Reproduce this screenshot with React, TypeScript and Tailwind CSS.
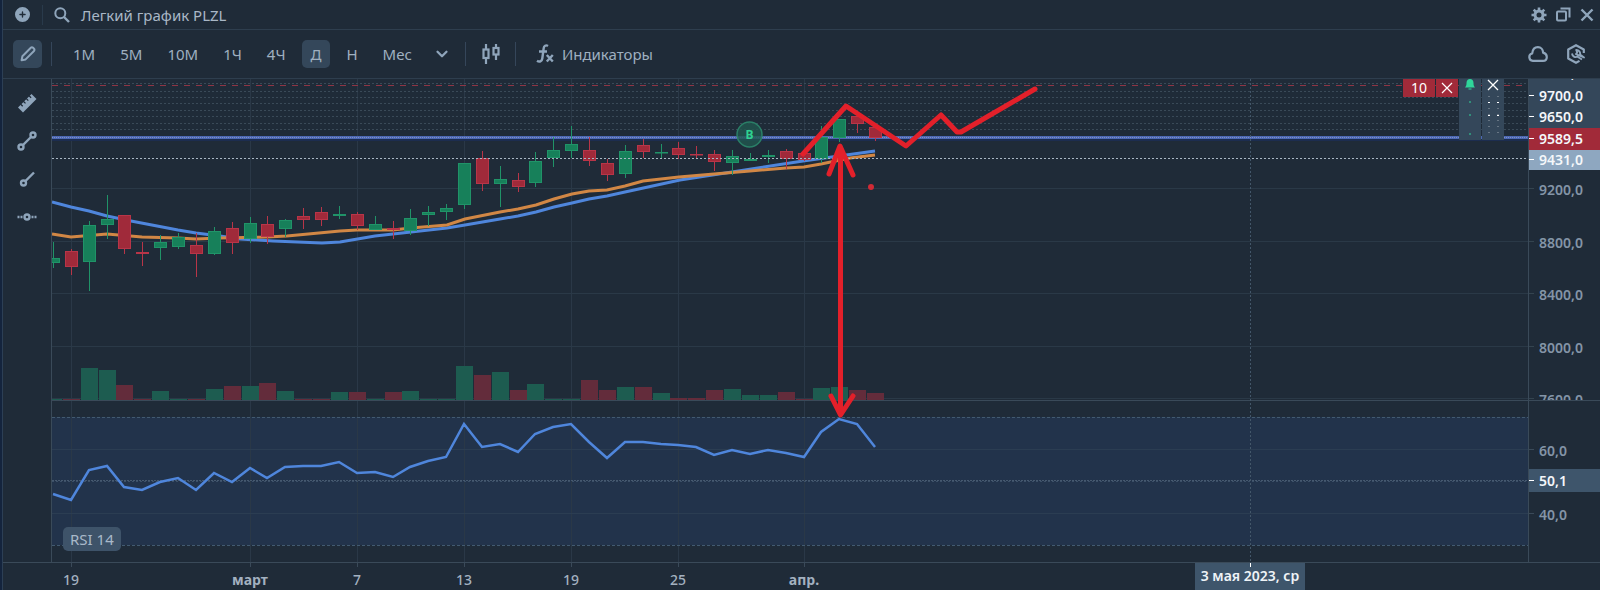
import type { ReactNode } from "react";
import { ChevronDown } from "lucide-react";
import { FaCirclePlus } from "react-icons/fa6";

// chart area starts right under the two toolbars
const TOP = 79;
const STEP = 17.87;

const barX = (i: number) => Math.floor(1.5 + i * STEP);

// [up, body top, body bottom, high, low, volume top]
const bars: [number, number, number, number, number, number][] = [
  [1, 258, 263, 242, 268, 399],
  [0, 251, 267, 249, 275, 399],
  [1, 225, 262, 221, 291, 368],
  [1, 219, 225, 195, 239, 370],
  [0, 215, 249, 215, 254, 385],
  [0, 252, 254, 242, 266, 399],
  [1, 242, 248, 235, 260, 391],
  [1, 237, 247, 233, 249, 399],
  [0, 245, 254, 233, 277, 399],
  [1, 231, 254, 227, 255, 389],
  [0, 228, 243, 222, 254, 386],
  [1, 223, 239, 217, 243, 386],
  [0, 224, 237, 216, 244, 383],
  [1, 220, 229, 219, 237, 391],
  [0, 216, 220, 208, 229, 399],
  [0, 212, 220, 207, 226, 399],
  [1, 214, 216, 206, 219, 392],
  [0, 214, 226, 212, 230, 392],
  [1, 224, 230, 216, 230, 399],
  [0, 228, 230, 221, 239, 392],
  [1, 218, 231, 209, 235, 391],
  [1, 212, 215, 206, 226, 399],
  [1, 208, 212, 204, 220, 399],
  [1, 163, 205, 163, 209, 366],
  [0, 158, 184, 151, 191, 375],
  [1, 179, 184, 166, 207, 372],
  [0, 180, 187, 173, 192, 390],
  [1, 161, 183, 152, 187, 384],
  [1, 150, 158, 137, 167, 399],
  [1, 144, 151, 126, 158, 399],
  [0, 150, 161, 137, 166, 380],
  [0, 163, 175, 159, 181, 390],
  [1, 151, 174, 145, 178, 387],
  [0, 145, 152, 139, 158, 387],
  [1, 152, 153, 144, 159, 393],
  [0, 148, 155, 142, 159, 398],
  [0, 154, 155, 146, 159, 398],
  [0, 154, 162, 150, 171, 390],
  [1, 156, 163, 150, 175, 389],
  [1, 159, 161, 153, 161, 395],
  [1, 155, 157, 150, 163, 395],
  [0, 151, 159, 149, 169, 392],
  [0, 153, 160, 151, 161, 399],
  [1, 137, 159, 126, 163, 388],
  [1, 119, 138, 119, 142, 387],
  [0, 116, 124, 114, 133, 390],
  [0, 127, 138, 125, 141, 393],
];

const slowMa =
  "0,202 19,207 37,211 55,216 79,221 126,230 144,233 168,236 188,239 221,241 270,243 288,242 323,236 359,232 395,228 413,225 448,219 466,216 484,212 502,207 520,203 537,199 555,196 573,192 628,180 680,172 751,161 787,156 823,151";
const fastMa =
  "0,234 19,237 55,234 90,237 126,238 144,239 168,238 215,237 235,236 288,231 305,230 341,230 359,228 395,225 413,219 448,212 466,209 484,205 502,199 520,194 537,191 555,190 573,186 591,181 627,177 662,174 698,171 734,168 752,167 769,164 798,158 823,155";

const rsi = [
  494, 500, 470, 466, 487, 490, 482, 478, 490, 473, 482, 468, 478, 467, 466, 466,
  462, 473, 472, 477, 467, 461, 457, 424, 447, 444, 452, 434, 427, 424, 442, 458,
  442, 442, 444, 445, 447, 455, 450, 454, 450, 453, 457, 432, 419, 424, 447,
];

const dates = [
  { i: 1, label: "19" },
  { i: 11, label: "март", bold: true },
  { i: 17, label: "7" },
  { i: 23, label: "13" },
  { i: 29, label: "19" },
  { i: 35, label: "25" },
  { i: 42, label: "апр.", bold: true },
];

const prices = [
  { y: 188, label: "9200,0" },
  { y: 241, label: "8800,0" },
  { y: 293, label: "8400,0" },
  { y: 346, label: "8000,0" },
  { y: 398, label: "7600,0" },
];

const orderLevels = [83, 91, 97, 103, 110, 116, 123, 129];
const intervals = ["1М", "5М", "10М", "1Ч", "4Ч", "Д", "Н", "Мес"];

function Divider() {
  return <div className="h-6 w-px bg-[#35465a]" />;
}

function IconButton({ label, children, className = "" }: { label: string; children: ReactNode; className?: string }) {
  return (
    <button type="button" aria-label={label} className={`flex items-center justify-center ${className}`}>
      {children}
    </button>
  );
}

function TitleBar() {
  return (
    <header className="flex h-[30px] items-center border-b border-[#2e3e4e] pr-[6px] pl-3">
      <IconButton label="Добавить">
        <FaCirclePlus size={15} />
      </IconButton>
      <span className="ml-3 h-5 w-px bg-[#293a4b]" />
      <IconButton label="Поиск" className="ml-[11px]">
        <svg width="16" height="16" viewBox="0 0 16 16" fill="none" stroke="currentColor">
          <circle cx="6.3" cy="6.3" r="5" strokeWidth="2" />
          <path d="M10 10l5 5" strokeWidth="2.4" />
        </svg>
      </IconButton>
      <h1 className="ml-[11px] text-[15px] leading-5 text-[#a9b7c6]">Легкий график PLZL</h1>
      <div className="ml-auto flex items-center gap-[9px]">
        <IconButton label="Настройки">
          <svg width="16" height="16" viewBox="0 0 16 16" fill="none" stroke="currentColor">
            <circle cx="8" cy="8" r="4" strokeWidth="3" />
            <path
              d="M8 .5v3M8 12.500v3M.5 8h3M12.500 8h3M2.700 2.700l2 2M11.300 11.300l2 2M2.700 13.300l2-2M11.300 4.700l2-2"
              strokeWidth="2.600"
            />
          </svg>
        </IconButton>
        <IconButton label="Дублировать">
          <svg width="15" height="15" viewBox="0 0 15 15" fill="none" stroke="currentColor" strokeWidth="2">
            <rect x="1" y="4.500" width="9" height="9" rx="1" />
            <path d="M4.500 1.500H13.500v9" />
          </svg>
        </IconButton>
        <IconButton label="Закрыть">
          <svg width="14" height="14" viewBox="0 0 14 14" stroke="currentColor" strokeWidth="2.400">
            <path d="M1.500 1.500l11 11M12.500 1.500l-11 11" />
          </svg>
        </IconButton>
      </div>
    </header>
  );
}

function Toolbar() {
  return (
    <div className="flex h-[49px] items-center border-b border-[#2e3e4e] pb-px pl-[10px] pr-[15px]">
      <IconButton label="Рисование" className="h-7 w-[29px] rounded-[5px] bg-[#34475a]">
        <svg width="16" height="16" viewBox="0 0 16 16" fill="none" stroke="currentColor" strokeWidth="2" strokeLinejoin="round">
          <path d="M1.6 14.2l.8-4L10.8 1.8a1.6 1.6 0 0 1 2.3 0l.9.9a1.6 1.6 0 0 1 0 2.3L5.6 13.4z" />
        </svg>
      </IconButton>
      <div className="ml-[9px]">
        <Divider />
      </div>
      <nav className="ml-3 flex items-center gap-[7px] text-[15px] leading-5 text-[#9fb0c0]">
        {intervals.map((item) => (
          <button
            key={item}
            type="button"
            className={`h-7 rounded-[5px] px-[9px] ${item === "Д" ? "bg-[#34475a]" : ""}`}
          >
            {item}
          </button>
        ))}
      </nav>
      <IconButton label="Ещё интервалы" className="ml-3">
        <ChevronDown size={18} strokeWidth={3} />
      </IconButton>
      <div className="ml-[14px]">
        <Divider />
      </div>
      <IconButton label="Тип графика" className="ml-4">
        <svg width="18" height="20" viewBox="0 0 18 20" fill="none" stroke="currentColor" strokeWidth="2.200">
          <rect x="1.500" y="5.500" width="5" height="8.500" />
          <path d="M4 0v5M4 14v6M14 0v3M14 10.500v5.500" />
          <rect x="11.500" y="4" width="5" height="6.500" />
        </svg>
      </IconButton>
      <div className="ml-[15px]">
        <Divider />
      </div>
      <button type="button" className="ml-5 flex items-center gap-2 text-[15px] leading-5 text-[#9fb0c0]">
        <svg width="18" height="19" viewBox="0 0 18 19" fill="none" stroke="#8fa5bb" strokeWidth="2.4">
          <path d="M12 2C9.8.6 8 1.8 7.7 4.2L6.3 14.5C5.9 17.4 3.5 18.400 1 16.800M3 7.500h8" />
          <path d="M10.800 11l6 6.500M16.800 11l-6 6.500" />
        </svg>
        Индикаторы
      </button>
      <div className="ml-auto flex items-center gap-[19px]">
        <IconButton label="Облако">
          <svg width="20" height="16" viewBox="0 0 20 16" fill="none" stroke="currentColor" strokeWidth="2.200" strokeLinejoin="round">
            <path d="M4.800 14.800a3.700 3.700 0 0 1-.6-7.300C4.600 3.700 6.900 1.200 9.900 1.200c3 0 5.100 2.200 5.200 5.400 2.200.6 3.700 2.200 3.700 4.300 0 2.300-1.600 3.900-3.800 3.900z" />
          </svg>
        </IconButton>
        <IconButton label="Сервис">
          <svg width="18" height="20" viewBox="0 0 18 20" fill="none" stroke="currentColor" strokeWidth="2.200" strokeLinejoin="round">
            <path d="M16.800 9V5.500L9 1.200 1.200 5.500v9L9 18.800l3.500-1.900" />
            <path d="M5 9.500c.4 2.800 3 4.300 5.500 3.200l4.500 2.800M17 13.500l-4-3c.7-2.400-1.200-4.600-3.800-4.500l1 2.500-1.200 1.600z" strokeWidth="1.900" />
          </svg>
        </IconButton>
      </div>
    </div>
  );
}

function DrawingTools() {
  return (
    <aside className="flex w-12 shrink-0 flex-col items-center gap-[18px] pt-[14px]">
      <IconButton label="Линейка">
        <svg width="20" height="20" viewBox="0 0 20 20">
          <path d="M1 14.500L14.500 1 19.500 6 6 19.500z" fill="currentColor" />
          <path d="M3.500 11l2.200 2.200M6.300 8.200l2.200 2.200M9.100 5.400l2.200 2.200M11.900 2.600l2.200 2.200" stroke="#1f2b38" strokeWidth="1.300" />
        </svg>
      </IconButton>
      <IconButton label="Отрезок">
        <svg width="20" height="20" viewBox="0 0 20 20" fill="none" stroke="currentColor" strokeWidth="2.400">
          <circle cx="4" cy="16" r="2.500" />
          <circle cx="16" cy="4" r="2.500" />
          <path d="M6 14L14 6" />
        </svg>
      </IconButton>
      <IconButton label="Луч">
        <svg width="20" height="20" viewBox="0 0 20 20" fill="none" stroke="currentColor" strokeWidth="2.400">
          <circle cx="6.500" cy="14" r="2.500" />
          <path d="M8.500 12L17 3.500" />
        </svg>
      </IconButton>
      <IconButton label="Горизонтальная линия">
        <svg width="20" height="20" viewBox="0 0 20 20" fill="none" stroke="currentColor" strokeWidth="2.400">
          <circle cx="10" cy="10" r="2.500" />
          <path d="M.5 10h2M3.500 10h2M14.500 10h2M17.500 10h2" />
        </svg>
      </IconButton>
    </aside>
  );
}

function Level({ y, stroke, dash, width = 1 }: { y: number; stroke: string; dash?: string; width?: number }) {
  return <line x1="0" x2="100%" y1={y + 0.5} y2={y + 0.5} stroke={stroke} strokeWidth={width} strokeDasharray={dash} />;
}

function Chart() {
  return (
    <svg width="100%" height="483" className="block" role="img" aria-label="График цены PLZL и RSI 14">
      <g transform={`translate(0 ${-TOP})`}>
        <rect x="0" y="417" width="100%" height="128" fill="#22334b" />

        {dates.map((d) => (
          <line key={d.i} x1={barX(d.i) + 0.5} x2={barX(d.i) + 0.5} y1="79" y2="562" stroke="#2a3847" />
        ))}
        {prices.map((p) => (
          <Level key={p.y} y={p.y} stroke="#2a3947" />
        ))}
        <Level y={449} stroke="#2b3d52" />
        <Level y={513} stroke="#2b3d52" />

        {orderLevels.map((y) => (
          <Level key={y} y={y} stroke="#3a4a58" dash="2 2" />
        ))}
        <Level y={85} stroke="#8e3545" dash="6 6" />
        <Level y={139} stroke="#1c2d50" width={3} />
        <Level y={137} stroke="#4c68b4" width={3} />
        <Level y={137} stroke="#8291c4" dash="1 1" />

        {bars.map(([up, , , , , vol], i) => (
          <rect key={i} x={barX(i) - 8} y={vol} width="17" height={400 - vol} fill={up ? "#1d5c50" : "#632c3b"} />
        ))}

        <polyline points={slowMa} fill="none" stroke="#4f86dc" strokeWidth="3" />
        <polyline points={fastMa} fill="none" stroke="#d18745" strokeWidth="3" />

        {bars.map(([up, top, bottom, high, low], i) => (
          <g key={i} stroke={up ? "#209368" : "#b83548"}>
            <line x1={barX(i) + 0.5} x2={barX(i) + 0.5} y1={high} y2={low} />
            <rect
              x={barX(i) - 5.5}
              y={top + 0.5}
              width="12"
              height={Math.max(bottom - top - 1, 0.5)}
              fill={up ? "#17805a" : "#a02a3a"}
            />
          </g>
        ))}

        <Level y={158} stroke="#a9b7c4" dash="2 2" />

        {/* buy marker */}
        <circle cx="697.500" cy="134.500" r="12.500" fill="#20584f" fillOpacity="0.800" stroke="#2a7f67" strokeWidth="1.500" />
        <text x="697.500" y="139" textAnchor="middle" fontSize="12" fontWeight="700" fill="#2fd191">
          В
        </text>

        <Level y={400} stroke="#3a4a59" />
        <Level y={417} stroke="#425a70" dash="3 2" />
        <Level y={480} stroke="#46596f" dash="2 1" />
        <Level y={481} stroke="#3c5068" dash="2 2" />
        <Level y={545} stroke="#425a70" dash="3 2" />
        <line x1="1198.500" x2="1198.500" y1="79" y2="562" stroke="#43576a" strokeDasharray="2 2" />

        <polyline
          points={rsi.map((y, i) => `${barX(i)},${y}`).join(" ")}
          fill="none"
          stroke="#4f86dc"
          strokeWidth="2.500"
        />

        {/* hand-drawn forecast */}
        <g fill="none" stroke="#e3202a" strokeWidth="5" strokeLinecap="round" strokeLinejoin="round">
          <polyline points="751,154 794,106 854,146 889,115 905,132 909,132 983,89" />
          <path d="M788.500 150V412" />
          <path d="M777 174L788 146L801 175M779 396L788.500 415L801 396" />
        </g>
        <circle cx="819" cy="187" r="3" fill="#d02a35" />
      </g>
    </svg>
  );
}

function OrderPanel() {
  return (
    <div className="absolute top-0 right-6 flex items-start gap-px text-white">
      <button type="button" className="h-[18px] w-8 bg-[#a12a39] text-[14px] leading-4">
        10
      </button>
      <IconButton label="Снять заявку" className="h-[18px] w-[22px] bg-[#a12a39]">
        <svg width="12" height="12" viewBox="0 0 12 12" stroke="currentColor" strokeWidth="1.200">
          <path d="M1 1l10 10M11 1L1 11" />
        </svg>
      </IconButton>
      <IconButton label="Оповещения" className="h-[61px] w-[22px] bg-[#34475a]">
        <svg width="22" height="61">
          <path d="M6 8.500c1.200-1.200 1.500-2.500 1.500-4.500C7.500 1.500 9 0 11 0s3.500 1.500 3.500 4c0 2 .3 3.300 1.500 4.500z" fill="#2fd69a" />
          <path d="M9.500 10h3M10 23h2M10 36h2M10 55h2" stroke="#2fd69a" strokeWidth="1.200" />
        </svg>
      </IconButton>
      <IconButton label="Удалить все" className="h-[61px] w-[22px] bg-[#34475a]">
        <svg width="22" height="61" stroke="currentColor">
          <path d="M6 1l10 10M16 1L6 11" strokeWidth="1.300" />
          <path d="M6 23.500h2M15 23.500h2M6 36.500h2M15 36.500h2" />
          <path d="M7 17v40M16 17v40" strokeDasharray="1 5" strokeOpacity="0.500" />
        </svg>
      </IconButton>
    </div>
  );
}

function PriceAxis() {
  return (
    <div className="w-[72px] shrink-0 border-l border-[#3a4a59]">
      <svg width="71" height="483" className="block" fontSize="14" fontWeight="600" fill="#8495a7">
        <svg width="71" height="321">
          <g transform={`translate(0 ${-TOP})`}>
            {prices.map((p) => (
              <g key={p.y}>
                <path d={`M0 ${p.y + 0.5}h5`} stroke="#34444f" />
                <text x="10" y={p.y + 7}>{p.label}</text>
              </g>
            ))}
            <rect y="79" width="72" height="49" fill="#34475a" />
            <rect y="128" width="72" height="22" fill="#a12a39" />
            <rect y="150" width="72" height="20" fill="#8ea7c0" />
            <path d="M0 95.500h5M0 116.500h5M0 138.500h5M0 159.500h5" stroke="#fff" />
            <g fill="#f4f7fa">
              <text x="10" y="78">9750,0</text>
              <text x="10" y="101">9700,0</text>
              <text x="10" y="122">9650,0</text>
              <text x="10" y="144">9589,5</text>
              <text x="10" y="165">9431,0</text>
            </g>
          </g>
        </svg>
        <g transform={`translate(0 ${-TOP})`}>
          <path d="M0 400.500h72" stroke="#3a4a59" />
          <path d="M0 449.500h5M0 513.500h5" stroke="#3a4a59" />
          <text x="10" y="456">60,0</text>
          <text x="10" y="520">40,0</text>
          <rect y="469" width="72" height="23" fill="#3e556b" />
          <path d="M0 480.500h5" stroke="#fff" />
          <text x="10" y="486" fill="#f4f7fa">50,1</text>
        </g>
      </svg>
    </div>
  );
}

function TimeAxis() {
  return (
    <footer className="border-t border-[#3a4a59] pl-[49px]">
      <svg width="100%" height="27" className="block" fontSize="14" textAnchor="middle" fill="#a3b1c0">
        {dates.map((d) => (
          <g key={d.i}>
            <path d={`M${barX(d.i) + 0.5} 0v4`} stroke="#3a4a59" />
            <text x={barX(d.i)} y="22" fontWeight={d.bold ? 700 : 500}>{d.label}</text>
          </g>
        ))}
        <rect x="1143" y="0" width="110" height="27" fill="#3e556b" />
        <path d="M1198.500 0v4" stroke="#fff" />
        <text x="1198" y="18" fontWeight="600" fill="#eef3f7">3 мая 2023, ср</text>
      </svg>
    </footer>
  );
}

export default function App() {
  return (
    <div className="min-h-screen bg-[#14243d] pl-[2px] font-['Noto_Sans',sans-serif] text-[#8fa5bb]">
      <div className="flex min-h-screen flex-col border-l border-[#2c3f55] bg-[#1f2b38]">
        <TitleBar />
        <Toolbar />
        <main className="flex flex-1">
          <DrawingTools />
          <section className="relative min-w-0 flex-1 overflow-hidden border-l border-[#3a4a59]">
            <Chart />
            <OrderPanel />
            <div className="absolute bottom-[11px] left-[11px] rounded-[5px] bg-[#3e5369] px-[7px] text-[15px] leading-6 text-[#a9b9c9]">
              RSI 14
            </div>
          </section>
          <PriceAxis />
        </main>
        <TimeAxis />
      </div>
    </div>
  );
}
